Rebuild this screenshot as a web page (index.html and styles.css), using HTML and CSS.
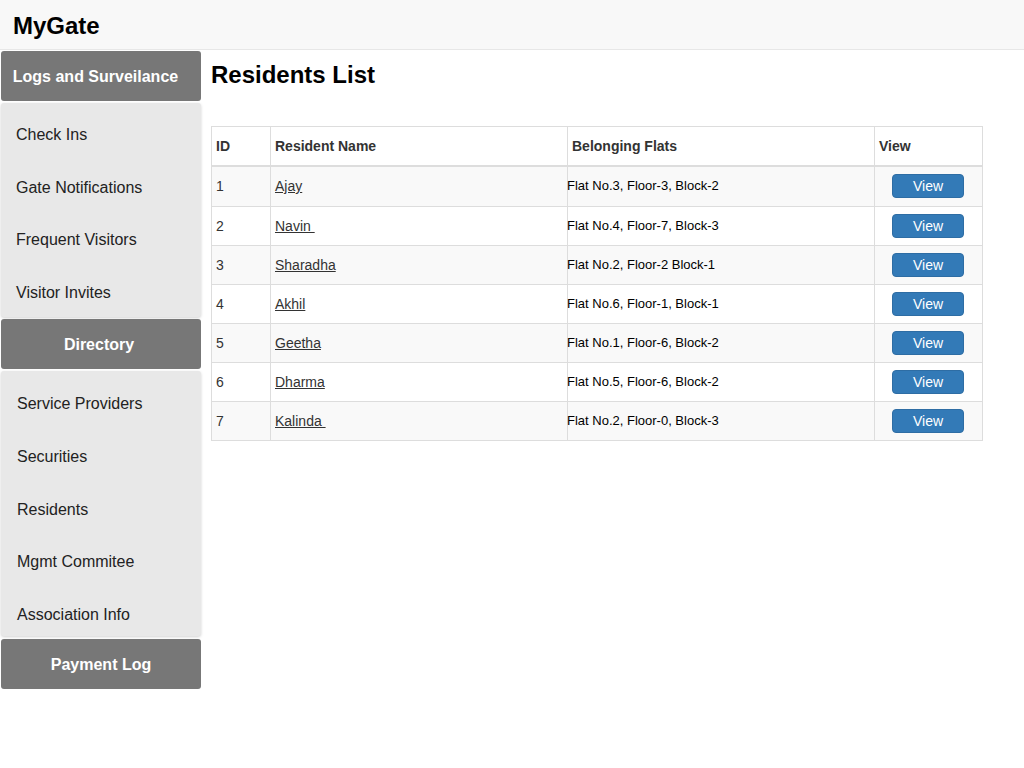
FILE: index.html
```html
<!DOCTYPE html>
<html>
<head>
<meta charset="utf-8">
<title>MyGate</title>
<link rel="stylesheet" href="styles.css">
</head>
<body>
<header class="topbar"><span class="brand">MyGate</span></header>
<div class="layout">
  <nav class="sidebar">
    <div class="section-head section-logs">Logs and Surveilance</div>
    <ul class="menu menu-logs">
      <li>Check Ins</li>
      <li>Gate Notifications</li>
      <li>Frequent Visitors</li>
      <li>Visitor Invites</li>
    </ul>
    <div class="section-head section-dir">Directory</div>
    <ul class="menu menu-dir">
      <li>Service Providers</li>
      <li>Securities</li>
      <li>Residents</li>
      <li>Mgmt Commitee</li>
      <li>Association Info</li>
    </ul>
    <div class="section-head section-pay">Payment Log</div>
  </nav>
  <main class="main">
    <h2 class="title">Residents List</h2>
    <table class="residents">
      <colgroup>
        <col class="c-id"><col class="c-name"><col class="c-flat"><col class="c-view">
      </colgroup>
      <thead>
        <tr><th>ID</th><th>Resident Name</th><th>Belonging Flats</th><th>View</th></tr>
      </thead>
      <tbody>
        <tr><td>1</td><td><a href="#">Ajay</a></td><td class="flat">Flat No.3, Floor-3, Block-2</td><td class="vc"><button class="btn">View</button></td></tr>
        <tr><td>2</td><td><a href="#">Navin&nbsp;</a></td><td class="flat">Flat No.4, Floor-7, Block-3</td><td class="vc"><button class="btn">View</button></td></tr>
        <tr><td>3</td><td><a href="#">Sharadha</a></td><td class="flat">Flat No.2, Floor-2 Block-1</td><td class="vc"><button class="btn">View</button></td></tr>
        <tr><td>4</td><td><a href="#">Akhil</a></td><td class="flat">Flat No.6, Floor-1, Block-1</td><td class="vc"><button class="btn">View</button></td></tr>
        <tr><td>5</td><td><a href="#">Geetha</a></td><td class="flat">Flat No.1, Floor-6, Block-2</td><td class="vc"><button class="btn">View</button></td></tr>
        <tr><td>6</td><td><a href="#">Dharma</a></td><td class="flat">Flat No.5, Floor-6, Block-2</td><td class="vc"><button class="btn">View</button></td></tr>
        <tr><td>7</td><td><a href="#">Kalinda&nbsp;</a></td><td class="flat">Flat No.2, Floor-0, Block-3</td><td class="vc"><button class="btn">View</button></td></tr>
      </tbody>
    </table>
  </main>
</div>
</body>
</html>
```
FILE: styles.css
```css
* { box-sizing: border-box; }
html, body { margin: 0; padding: 0; background: #fff; }
body { font-family: "Liberation Sans", Arial, sans-serif; color: #333; font-size: 14px; }

.topbar {
  height: 50px;
  background: #f8f8f8;
  border-bottom: 1px solid #e7e7e7;
  display: flex;
  align-items: center;
  padding-left: 13px;
}
.brand { font-size: 24px; font-weight: bold; color: #000; line-height: 26px; padding-top: 2px; }

.layout { display: flex; align-items: flex-start; padding-top: 1px; }

.sidebar { width: 200px; margin-left: 1px; flex: none; }
.section-head {
  height: 50px;
  background: #777;
  color: #fff;
  font-weight: bold;
  font-size: 16px;
  border-radius: 3px;
  display: flex;
  align-items: center;
  justify-content: center;
  padding-top: 1px;
}
.section-logs { padding-right: 11px; }
.section-dir { padding-right: 4px; }
.section-pay { margin-top: 3px; }

.menu {
  list-style: none;
  margin: 2px 0;
  padding: 5px 0 0;
  background: #e8e8e8;
  border-radius: 3px;
  box-shadow: 0 1px 3px rgba(0,0,0,0.18);
  font-size: 16px;
  color: #222;
}
.menu li { padding: 17px 15px 15px; line-height: 20.6px; }
.menu-logs { height: 214px; }
.menu-dir { height: 265px; padding-top: 6px; }
.menu-dir li { padding-left: 16px; line-height: 20.8px; }

.main { margin-left: 10px; flex: 1; }
.title {
  margin: 11px 0 38px;
  font-size: 24px;
  line-height: 26px;
  color: #000;
  font-weight: bold;
}

.residents {
  border-collapse: collapse;
  width: 772px;
  border: 1px solid #ddd;
  font-size: 14px;
}
.c-id { width: 59px; }
.c-name { width: 297px; }
.c-flat { width: 307px; }
.c-view { width: 108px; }
.residents th {
  text-align: left;
  font-weight: bold;
  color: #333;
  padding: 11px 4px 10px;
  line-height: 17px;
  border: 1px solid #ddd;
  border-bottom: 2px solid #ddd;
  vertical-align: middle;
}
.residents td {
  padding: 7px 4px;
  line-height: 20px;
  border: 1px solid #ddd;
  vertical-align: middle;
  color: #333;
}
.residents tbody tr:nth-child(odd) { background: #f9f9f9; }
.residents tbody tr:first-child td { padding-top: 7px; padding-bottom: 8px; }
.residents td.flat { padding-left: 0; color: #000; font-size: 13px; text-indent: -1px; }
.residents a { color: #333; text-decoration: underline; }
.residents td.vc { text-align: center; padding-left: 0; padding-right: 1px; }

.btn {
  width: 72px;
  height: 24px;
  background: #337ab7;
  border: 1px solid #2e6da4;
  border-radius: 4px;
  color: #fff;
  font-family: "Liberation Sans", Arial, sans-serif;
  font-size: 14px;
  padding: 0;
  line-height: 20px;
  display: inline-block;
  vertical-align: middle;
}
```
